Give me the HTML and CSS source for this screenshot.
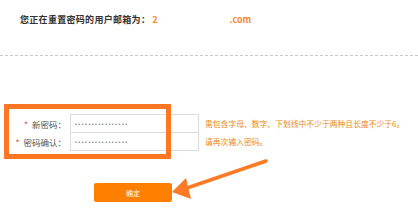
FILE: index.html
```html
<!DOCTYPE html>
<html lang="zh-CN">
<head>
    <meta charset="UTF-8">
    <title>重置密码</title>
    <link rel="stylesheet" href="styles.css">
</head>
<body>
    <div class="header">
        <span class="tip">您正在重置密码的用户邮箱为：</span><span class="mail">2<span class="hidden"></span>.com</span>
    </div>

    <div class="form">
        <div class="row">
            <label class="label"><span class="star">*</span>新密码：</label>
            <input class="field" type="password" value="aaaaaaaaaaaaaaaa">
            <span class="hint">需包含字母、数字、下划线中不少于两种且长度不少于6。</span>
        </div>
        <div class="row">
            <label class="label"><span class="star">*</span>密码确认：</label>
            <input class="field" type="password" value="aaaaaaaaaaaaaaaa">
            <span class="hint">请再次输入密码。</span>
        </div>
        <button class="btn">确定</button>
    </div>

    <!-- 标注 -->
    <div class="mark"></div>
    <svg class="arrow" width="418" height="216" viewBox="0 0 418 216">
        <line x1="266" y1="161" x2="184" y2="189" stroke="#ff7a26" stroke-width="3.5" stroke-linecap="round"/>
        <polygon points="172,192 186,178 191,199" fill="#ff7a26"/>
    </svg>
</body>
</html>
```

FILE: styles.css
```css
body {
    margin: 0;
    background: #fff;
    font-family: "Noto Sans CJK SC", "Liberation Sans", sans-serif;
    position: relative;
    width: 418px;
    height: 216px;
    overflow: hidden;
}
.header {
    height: 45px;
    padding: 10px 0 0 20px;
    border-bottom: 1px dashed #c8c8c8;
    line-height: 12px;
}
.tip {
    font-size: 9px;
    font-weight: bold;
    color: #333;
    letter-spacing: 0.3px;
}
.mail {
    font-size: 9px;
    font-weight: bold;
    color: #f5892a;
    margin-left: 2px;
}
.mail .hidden {
    display: inline-block;
    width: 72px;
}
.form {
    margin-top: 58px;
}
.row {
    display: flex;
    align-items: center;
    height: 19px;
}
.row + .row {
    margin-top: -1px;
}
.label {
    width: 66px;
    text-align: right;
    font-size: 8.5px;
    color: #555;
}
.star {
    color: #e5484d;
    margin-right: 4px;
}
.field {
    box-sizing: border-box;
    width: 129px;
    height: 19px;
    margin: 0 0 0 4px;
    padding: 0 4px;
    border: 1px solid #dcdcdc;
    font-size: 5px;
    letter-spacing: 1.6px;
    color: #777;
    outline: none;
}
.hint {
    margin-left: 6px;
    font-size: 7.8px;
    color: #ee8a10;
}
.btn {
    display: block;
    margin: 32px 0 0 94px;
    width: 78px;
    height: 19px;
    border: none;
    border-radius: 2px;
    background: #ff8000;
    color: #fff;
    font-family: inherit;
    font-size: 7px;
    padding: 0;
}
.mark {
    position: absolute;
    left: 4px;
    top: 104px;
    width: 167px;
    height: 55px;
    box-sizing: border-box;
    border: 5px solid #ff7722;
}
.arrow {
    position: absolute;
    left: 0;
    top: 0;
}
```
